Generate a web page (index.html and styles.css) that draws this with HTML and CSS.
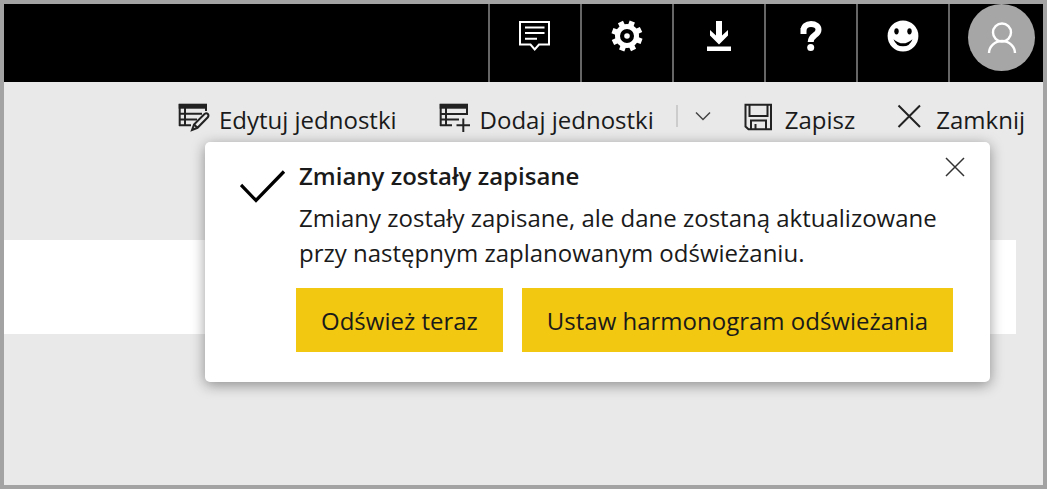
FILE: index.html
```html
<!DOCTYPE html>
<html lang="pl">
<head>
<meta charset="utf-8">
<meta name="viewport" content="width=device-width, initial-scale=1">
<title>Zmiany zostały zapisane</title>
<link rel="stylesheet" href="styles.css">
</head>
<body>
<div class="app">
  <header class="topbar">
    <button class="topbar-item" type="button" aria-label="Komentarze">
      <svg class="icon" viewBox="0 0 32 32" fill="none" stroke="#fff" stroke-width="2"><path d="M1 2h29v22.500H20L15.700 29.500 11.500 24.500H1z"/><path d="M6 7.500h19.500M6 13h19.500M6 18.700h12"/></svg>
    </button>
    <button class="topbar-item" type="button" aria-label="Ustawienia">
      <svg class="icon" viewBox="0 0 32 32" fill="none" stroke="#fff"><circle cx="16" cy="16" r="9.500" stroke-width="5"/><circle cx="16" cy="16" r="2.800" fill="#fff" stroke="none"/><g stroke-width="5.600"><path d="M16 .5v6M16 25.500v6" transform="rotate(20 16 16)"/><path d="M16 .5v6M16 25.500v6" transform="rotate(65 16 16)"/><path d="M16 .5v6M16 25.500v6" transform="rotate(110 16 16)"/><path d="M16 .5v6M16 25.500v6" transform="rotate(155 16 16)"/></g></svg>
    </button>
    <button class="topbar-item" type="button" aria-label="Pobierz">
      <svg class="icon" viewBox="0 0 32 32" fill="#fff"><path d="M13 1h6v14.500l6-5.500v5.500l-9 9-9-9V10l6 5.500zM4 26.500h24V31H4z"/></svg>
    </button>
    <button class="topbar-item" type="button" aria-label="Pomoc">
      <svg class="icon" viewBox="0 0 32 32" fill="none" stroke="#fff" stroke-width="6"><path d="M5.500 11H8.500C8.500 6.500 11.500 4 16 4C20.500 4 23.500 6.300 23.500 9.700C23.500 15.500 15.700 15 15.700 22"/><circle cx="15.700" cy="27.500" r="3.500" fill="#fff" stroke="none"/></svg>
    </button>
    <button class="topbar-item" type="button" aria-label="Opinia">
      <svg class="icon" viewBox="0 0 32 32"><circle cx="16" cy="16" r="15.400" fill="#fff"/><ellipse cx="9.500" cy="11.300" rx="2.200" ry="3.100"/><ellipse cx="22.500" cy="11.300" rx="2.200" ry="3.100"/><path d="M6.500 19.200Q16 27.500 25.500 19.200Q23 26.300 16 26.300Q9 26.300 6.500 19.200z"/></svg>
    </button>
    <button class="topbar-item topbar-account" type="button" aria-label="Konto">
      <span class="avatar"><svg class="icon" viewBox="0 0 32 32" fill="none" stroke="#fff" stroke-width="2.400"><circle cx="16" cy="10.500" r="9"/><path d="M3 31a13 12 0 0 1 26 0"/></svg></span>
    </button>
  </header>
  <main class="workspace">
    <div class="toolbar">
      <button class="command" type="button">
        <svg class="icon" viewBox="0 0 32 32" fill="none" stroke="#222" stroke-width="2"><path d="M.7.700h28.300v5H.7z" fill="#222" stroke="none"/><path d="M1.700 1v22M7 5v18M28 5v3M1 10.700h23M1 16.500h18M1 22.300h12"/><path d="M14 27l2-5.500L26.500 11q2-1.500 3.300 0t0 3.300L19.500 24.800zM16 21.500l3.500 3.300"/></svg>
        Edytuj jednostki
      </button>
      <button class="command command-add" type="button">
        <svg class="icon" viewBox="0 0 32 32" fill="none" stroke="#222" stroke-width="2"><path d="M.7.700h28.300v5H.7z" fill="#222" stroke="none"/><path d="M1.700 1v22M7 5v18M28 5v6.500M1 11h28M1 16.500h19M1 22.300h12M24.300 15.500v13.500M17.500 22.200h13.500"/></svg>
        Dodaj jednostki
      </button>
      <button class="command-more" type="button" aria-label="Więcej opcji">
        <svg class="chevron" viewBox="0 0 16 10" fill="none" stroke="#444" stroke-width="1.500"><path d="M1 1.500l7 7 7-7"/></svg>
      </button>
      <button class="command command-save" type="button">
        <svg class="icon" viewBox="0 0 32 32" fill="none" stroke="#222" stroke-width="2"><path d="M1.500 1.700h25.500v24.600H4.500L1.500 23.500z"/><path d="M5.500 2v11h18V2M7 26v-8.500h15V26M11.500 26v-5"/></svg>
        Zapisz
      </button>
      <button class="command command-close" type="button">
        <svg class="icon" viewBox="0 0 32 32" fill="none" stroke="#222" stroke-width="2"><path d="M3.500 2.500l21.500 21.500M25 2.500L3.500 24"/></svg>
        Zamknij
      </button>
    </div>
    <div class="strip"></div>
    <section class="notice" role="dialog" aria-labelledby="notice-title">
      <svg class="notice-check" viewBox="0 0 46 34" fill="none" stroke="#000" stroke-width="3.300"><path d="M1 15l15 15.500L44 1.500"/></svg>
      <div class="notice-body">
        <h1 class="notice-title" id="notice-title">Zmiany zostały zapisane</h1>
        <p class="notice-text">Zmiany zostały zapisane, ale dane zostaną aktualizowane przy następnym zaplanowanym odświeżaniu.</p>
        <div class="notice-actions">
          <button class="action" type="button">Odśwież teraz</button>
          <button class="action" type="button">Ustaw harmonogram odświeżania</button>
        </div>
      </div>
      <button class="notice-close" type="button" aria-label="Zamknij powiadomienie">
        <svg class="close-icon" viewBox="0 0 20 20" fill="none" stroke="#333" stroke-width="1.500"><path d="M1 1l18 18M19 1L1 19"/></svg>
      </button>
    </section>
  </main>
</div>
</body>
</html>
```
FILE: styles.css
```css
* { box-sizing: border-box; }

body {
  margin: 0;
  font-family: "Open Sans", "Noto Sans", sans-serif;
  font-size: 24px;
  color: #1a1a1a;
}

button {
  padding: 0;
  border: 0;
  background: none;
  font: inherit;
  color: inherit;
  cursor: pointer;
}

svg { display: block; flex: none; }
.icon { width: 32px; height: 32px; }

.app {
  display: flex;
  flex-direction: column;
  min-height: 100vh;
  border: 4px solid #a3a3a3;
  background: #e9e9e9;
}

.topbar {
  display: flex;
  justify-content: flex-end;
  height: 78px;
  background: #000;
}

.topbar-item {
  display: flex;
  justify-content: center;
  width: 92px;
  padding-top: 16px;
  border-left: 2px solid #666;
}

.topbar-account {
  justify-content: flex-end;
  width: 95px;
  padding: 0 8px 0 0;
}

.avatar {
  display: flex;
  align-items: center;
  justify-content: center;
  width: 67px;
  height: 67px;
  border-radius: 50%;
  background: #a6a6a6;
}

.workspace {
  position: relative;
  flex: 1;
}

.toolbar {
  display: flex;
  justify-content: flex-end;
  height: 158px;
  padding: 16px 18px 0 0;
}

.command {
  display: flex;
  align-items: center;
  gap: 9px;
  height: 42px;
  white-space: nowrap;
}

.command-add { margin-left: 42px; }
.command-save { margin-left: 33px; }
.command-close { margin-left: 40px; }

.command-more {
  height: 22px;
  margin: 7px 0 0 22px;
  padding-left: 17px;
  border-left: 2px solid #ccc;
}

.chevron { width: 16px; height: 10px; }

.strip {
  height: 94px;
  margin-right: 27px;
  background: #fff;
}

.notice {
  position: absolute;
  top: 60px;
  right: 53px;
  display: flex;
  gap: 10px;
  width: 785px;
  padding: 16px 37px 30px 35px;
  border-radius: 5px;
  background: #fff;
  box-shadow: 0 3px 14px rgba(0, 0, 0, 0.4);
}

.notice-check {
  width: 46px;
  height: 34px;
  margin-top: 12px;
}

.notice-body { flex: 1; }

.notice-title,
.notice-text {
  margin: 0;
  padding-left: 3px;
  font-size: 24px;
  line-height: 35px;
}

.notice-title {
  margin-bottom: 7px;
  font-weight: 600;
}

.notice-actions {
  display: flex;
  gap: 19px;
  margin-top: 18px;
}

.action {
  height: 64px;
  padding: 0 25px;
  background: #f2c811;
  white-space: nowrap;
}

.notice-close {
  position: absolute;
  top: 15px;
  right: 25px;
}

.close-icon { width: 20px; height: 20px; }
```
